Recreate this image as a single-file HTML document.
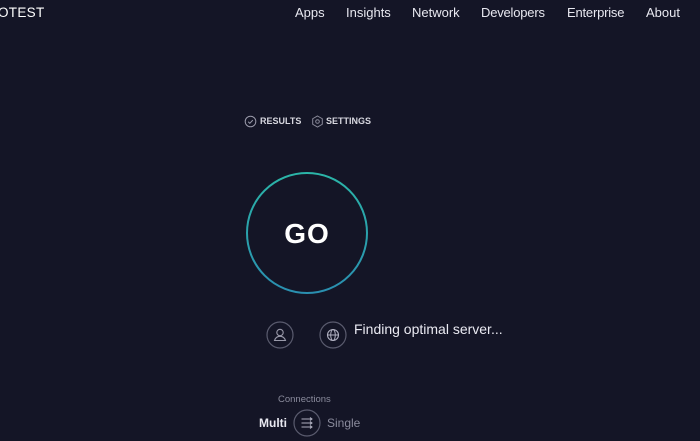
<!DOCTYPE html>
<html><head><style>
html,body{margin:0;padding:0;width:700px;height:441px;background:#141526;overflow:hidden;font-family:"Liberation Sans",sans-serif;color:#fff}
.a{position:absolute;white-space:nowrap}
.nav{top:5px;font-size:13px;color:#e8e8f0}
</style></head><body>
<div class="a" style="left:-2px;top:5px;font-size:13.5px;letter-spacing:0.3px">OTEST</div>
<div class="a nav" style="left:295px">Apps</div>
<div class="a nav" style="left:346px">Insights</div>
<div class="a nav" style="left:412px">Network</div>
<div class="a nav" style="left:481px;letter-spacing:-0.2px">Developers</div>
<div class="a nav" style="left:567px;letter-spacing:-0.2px">Enterprise</div>
<div class="a nav" style="left:646px">About</div>

<svg class="a" style="left:244px;top:115px" width="13" height="13" viewBox="0 0 13 13"><circle cx="6.5" cy="6.5" r="5.3" fill="none" stroke="#9a9aaa" stroke-width="1"/><path d="M4.2 6.8l1.6 1.5 3-3.2" fill="none" stroke="#9a9aaa" stroke-width="1"/></svg>
<div class="a" style="left:260px;top:116px;font-size:9px;font-weight:bold;color:#d8d8e0">RESULTS</div>
<svg class="a" style="left:311px;top:115px" width="13" height="13" viewBox="0 0 13 13"><path d="M6.5 1l4.8 2.75v5.5L6.5 12 1.7 9.25v-5.5z" fill="none" stroke="#8a8a9a" stroke-width="1"/><circle cx="6.5" cy="6.5" r="1.8" fill="none" stroke="#8a8a9a" stroke-width="1"/></svg>
<div class="a" style="left:326px;top:116px;font-size:9px;font-weight:bold;color:#d8d8e0">SETTINGS</div>

<svg class="a" style="left:245px;top:171px" width="124" height="124" viewBox="0 0 124 124"><defs><linearGradient id="g" x1="0" y1="0" x2="0" y2="1"><stop offset="0" stop-color="#2bb5a8"/><stop offset="1" stop-color="#2a8fb0"/></linearGradient></defs><circle cx="62" cy="62" r="60" fill="none" stroke="url(#g)" stroke-width="2"/></svg>
<div class="a" style="left:247px;top:218px;width:120px;text-align:center;font-size:28px;font-weight:bold;letter-spacing:1px">GO</div>

<svg class="a" style="left:266px;top:321px" width="28" height="28" viewBox="0 0 28 28"><circle cx="14" cy="14" r="13" fill="none" stroke="#5a5b6e" stroke-width="1.2"/><circle cx="14" cy="11.5" r="3.2" fill="none" stroke="#9a9aaa" stroke-width="1.1"/><path d="M8.5 19.5c1-3 3-4.2 5.5-4.2s4.5 1.2 5.5 4.2z" fill="none" stroke="#9a9aaa" stroke-width="1.1"/></svg>
<svg class="a" style="left:319px;top:321px" width="28" height="28" viewBox="0 0 28 28"><circle cx="14" cy="14" r="13" fill="none" stroke="#5a5b6e" stroke-width="1.2"/><circle cx="14" cy="14" r="5.5" fill="none" stroke="#b0b0c0" stroke-width="1.1"/><ellipse cx="14" cy="14" rx="2.3" ry="5.5" fill="none" stroke="#b0b0c0" stroke-width="1"/><path d="M8.5 14h11" stroke="#b0b0c0" stroke-width="1"/></svg>
<div class="a" style="left:354px;top:321px;font-size:14px;color:#eaeaf2">Finding optimal server...</div>

<div class="a" style="left:278px;top:394px;font-size:9.5px;color:#8a8b9c">Connections</div>
<div class="a" style="left:259px;top:416px;font-size:12px;font-weight:bold;color:#e8e8f0">Multi</div>
<svg class="a" style="left:293px;top:409px" width="28" height="28" viewBox="0 0 28 28"><circle cx="14" cy="14" r="13" fill="none" stroke="#5a5b6e" stroke-width="1.2"/><path d="M8.5 10h10M8.5 14h10M8.5 18h10M17 8.5l2 1.5-2 1.5M17 12.5l2 1.5-2 1.5M17 16.5l2 1.5-2 1.5" fill="none" stroke="#b0b0c0" stroke-width="1"/></svg>
<div class="a" style="left:327px;top:416px;font-size:12px;color:#8a8b9c">Single</div>
</body></html>
